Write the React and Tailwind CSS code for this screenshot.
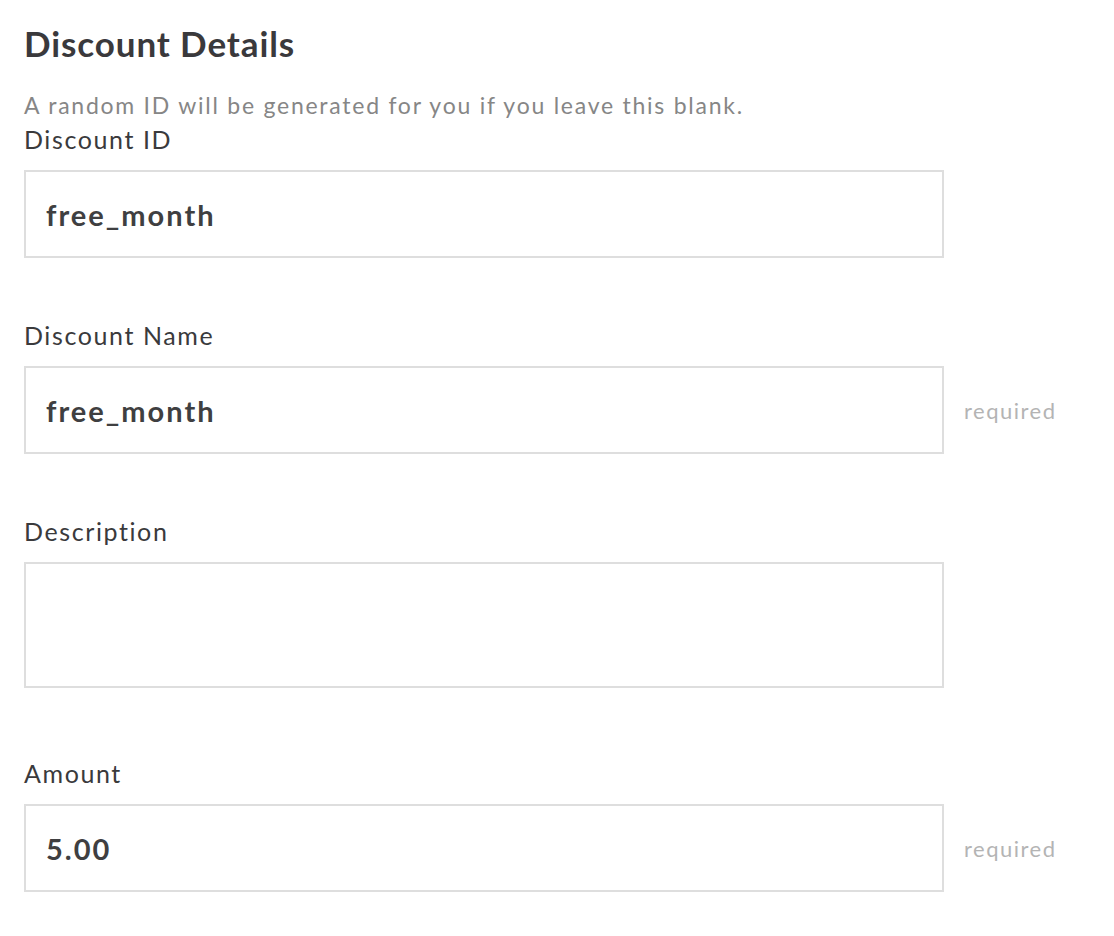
import React from "react";

const Field = ({ label, value, required, tall, className = "" }) => (
  <div className={className}>
    <label className="block text-[25px] leading-[34px] tracking-[1.6px] text-[#3a3a3c]">{label}</label>
    <div className="mt-[14px] flex items-center">
      {tall ? (
        <textarea className="block w-[920px] h-[126px] border-2 border-[#dedede] resize-none outline-none px-5 py-4 text-[28px]" />
      ) : (
        <input
          defaultValue={value}
          className="block w-[920px] h-[88px] border-2 border-[#dedede] outline-none px-5 text-[29px] tracking-[2px] font-bold text-[#3f3f41]"
        />
      )}
      {required && (
        <span className="ml-5 text-[22px] tracking-[1.5px] text-[#b4b4b4]">required</span>
      )}
    </div>
  </div>
);

export default function App() {
  return (
    <div className="min-h-screen bg-white px-6 pt-[21px] font-['Lato',sans-serif]">
      <h2 className="text-[35px] leading-[44px] tracking-[0.9px] font-bold text-[#3a393c]">Discount Details</h2>
      <p className="mt-[23px] text-[23px] leading-[34px] tracking-[1.75px] text-[#868686]">
        A random ID will be generated for you if you leave this blank.
      </p>
      <Field label="Discount ID" value="free_month" />
      <Field className="mt-[60px]" label="Discount Name" value="free_month" required />
      <Field className="mt-[60px]" label="Description" tall />
      <Field className="mt-[68px]" label="Amount" value="5.00" required />
    </div>
  );
}
